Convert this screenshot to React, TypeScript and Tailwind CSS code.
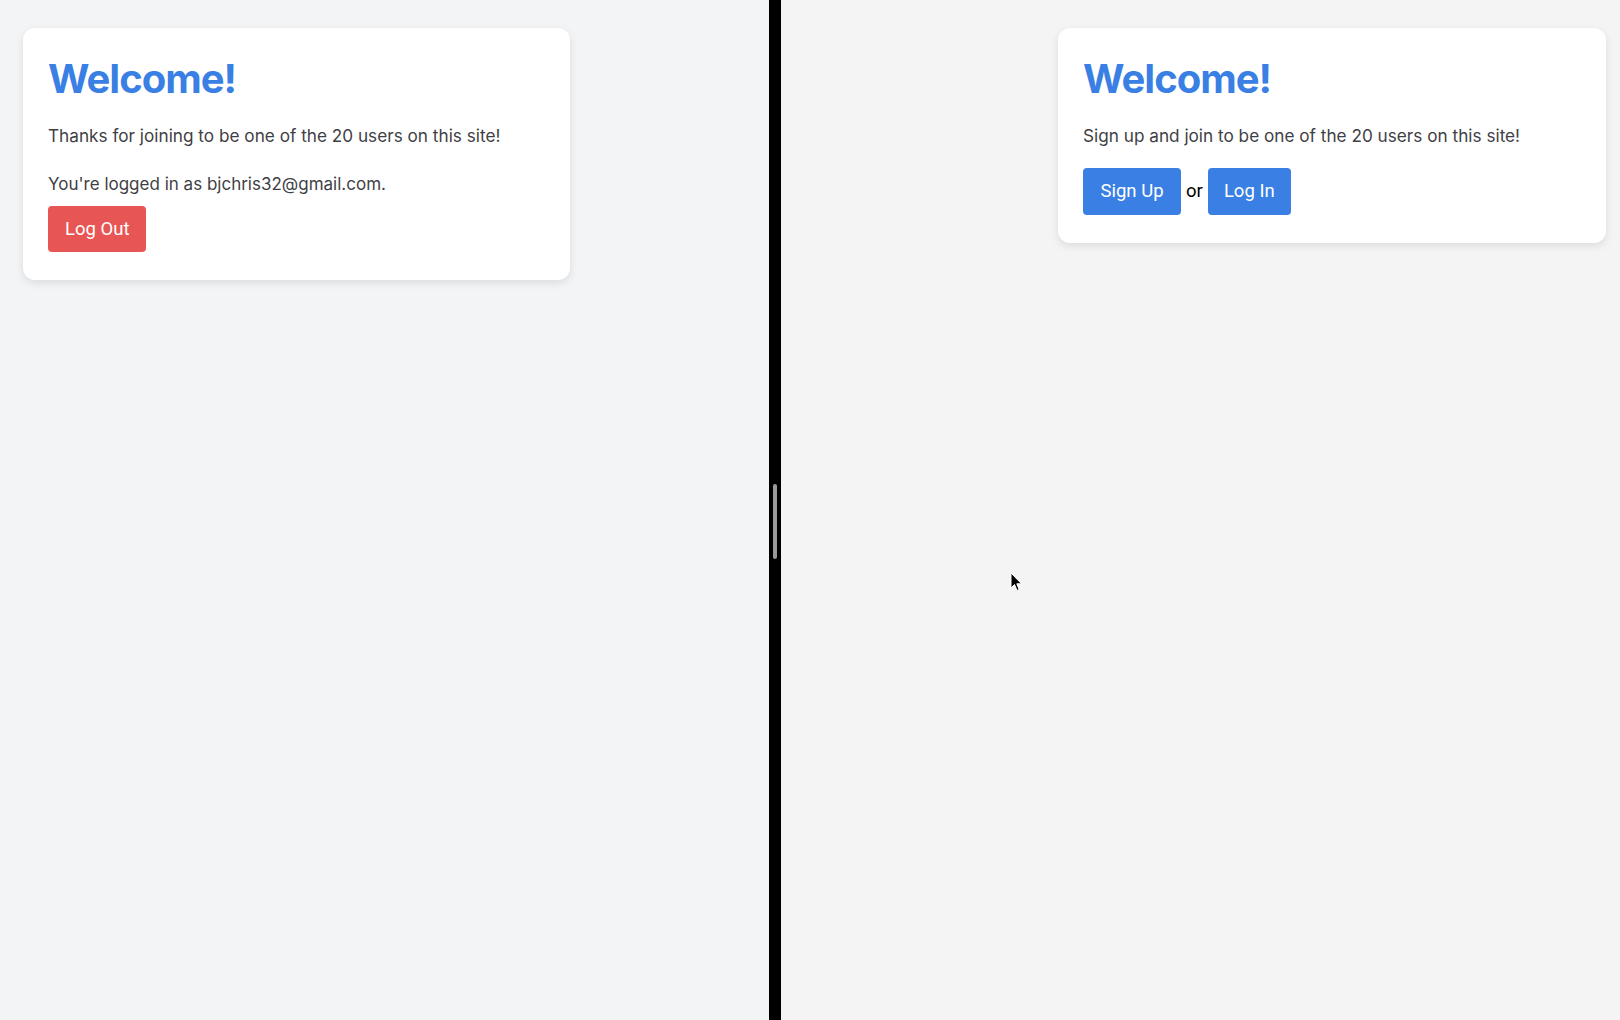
import React from 'react';

const Card = ({ children, className = '' }: { children: React.ReactNode; className?: string }) => (
  <div className={`w-[547px] bg-white rounded-xl shadow-[0_3px_8px_rgba(0,0,0,0.10)] px-[25px] pt-[27px] pb-7 ${className}`}>
    {children}
  </div>
);

const Title = () => (
  <h1 className="text-[40px] leading-[48px] font-bold text-[#3a7fe3] tracking-[-1px]">Welcome!</h1>
);

const App = () => {
  return (
    <div className="relative flex h-[1020px] w-[1620px] overflow-hidden bg-[#f3f4f6] font-['Inter',sans-serif]">
      {/* left window: logged in */}
      <div className="w-[769px] pl-[23px] pt-[28px]">
        <Card>
          <Title />
          <p className="mt-[19px] text-[17.2px] leading-7 text-[#3f3f46]">Thanks for joining to be one of the 20 users on this site!</p>
          <p className="mt-5 text-[17px] leading-7 text-[#3f3f46]">You're logged in as bjchris32@gmail.com.</p>
          <button className="mt-2 rounded bg-[#e85555] px-[17px] py-2.5 text-[18.5px] leading-[26px] text-white font-['Roboto',sans-serif]">
            Log Out
          </button>
        </Card>
      </div>

      {/* divider */}
      <div className="flex w-[12px] justify-center bg-black pt-[484px]">
        <div className="h-[75px] w-[4px] rounded-full bg-[#9a9a9a]" />
      </div>

      {/* right window: logged out */}
      <div className="flex flex-1 justify-end bg-[#f4f4f5] pr-[14px] pt-[28px]">
        <Card className="h-fit w-[548px]">
          <Title />
          <p className="mt-[19px] text-[17.2px] leading-7 text-[#3f3f46]">Sign up and join to be one of the 20 users on this site!</p>
          <div className="mt-[18px] flex items-center gap-[5px] font-['Roboto',sans-serif] text-[18.5px] leading-[27px]">
            <button className="rounded bg-[#3a7fe3] px-[17.5px] py-2.5 text-white">Sign Up</button>
            <span className="text-black">or</span>
            <button className="rounded bg-[#3a7fe3] px-4 py-2.5 text-white">Log In</button>
          </div>
        </Card>
      </div>

      {/* mouse pointer */}
      <svg className="absolute left-[1010px] top-[572px]" width="13" height="20" viewBox="0 0 13 20">
        <path d="M1 1 L1 16 L4.5 12.5 L7 18.5 L9.2 17.5 L6.8 11.8 L11.5 11.8 Z" fill="#000" stroke="#fff" strokeWidth="1" />
      </svg>
    </div>
  );
};

export default App;
